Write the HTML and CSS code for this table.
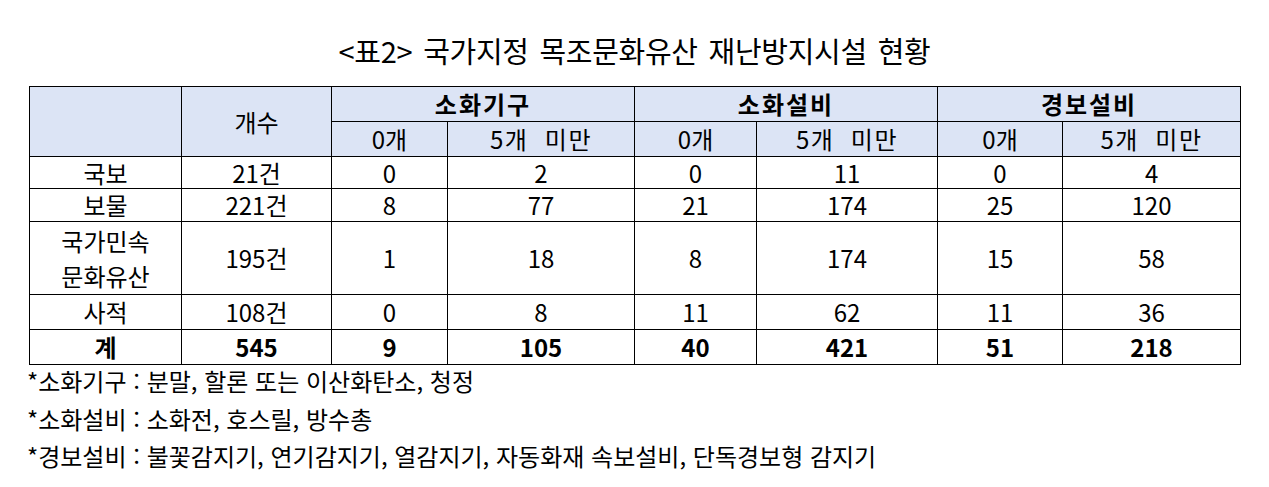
FILE: index.html
```html
<!DOCTYPE html>
<html lang="ko">
<head>
<meta charset="utf-8">
<link rel="stylesheet" href="styles.css">
</head>
<body>
<div class="page">
  <h1 class="title">&lt;표2&gt; 국가지정 목조문화유산 재난방지시설 현황</h1>
  <table class="tbl">
    <colgroup>
      <col class="c1"><col class="c2"><col class="c3"><col class="c4"><col class="c5"><col class="c6"><col class="c7"><col class="c8">
    </colgroup>
    <thead>
      <tr class="h1">
        <th rowspan="2"></th>
        <th rowspan="2" class="norm">개수</th>
        <th colspan="2">소화기구</th>
        <th colspan="2">소화설비</th>
        <th colspan="2">경보설비</th>
      </tr>
      <tr class="h2">
        <th class="norm">0개</th><th class="norm sub">5개&nbsp; 미만</th>
        <th class="norm">0개</th><th class="norm sub">5개&nbsp; 미만</th>
        <th class="norm">0개</th><th class="norm sub">5개&nbsp; 미만</th>
      </tr>
    </thead>
    <tbody>
      <tr class="r1"><td>국보</td><td>21건</td><td>0</td><td>2</td><td>0</td><td>11</td><td>0</td><td>4</td></tr>
      <tr class="r2"><td>보물</td><td>221건</td><td>8</td><td>77</td><td>21</td><td>174</td><td>25</td><td>120</td></tr>
      <tr class="r3"><td class="two">국가민속<br>문화유산</td><td>195건</td><td>1</td><td>18</td><td>8</td><td>174</td><td>15</td><td>58</td></tr>
      <tr class="r4"><td>사적</td><td>108건</td><td>0</td><td>8</td><td>11</td><td>62</td><td>11</td><td>36</td></tr>
      <tr class="r5 total"><td>계</td><td>545</td><td>9</td><td>105</td><td>40</td><td>421</td><td>51</td><td>218</td></tr>
    </tbody>
  </table>
  <div class="notes">
    <p>*소화기구 : 분말, 할론 또는 이산화탄소, 청정</p>
    <p>*소화설비 : 소화전, 호스릴, 방수총</p>
    <p>*경보설비 : 불꽃감지기, 연기감지기, 열감지기, 자동화재 속보설비, 단독경보형 감지기</p>
  </div>
</div>
</body>
</html>
```

FILE: styles.css
```css
html, body {
  margin: 0;
  padding: 0;
  background: #ffffff;
}
body {
  font-family: "Noto Sans CJK KR", "Noto Sans", sans-serif;
  color: #000;
}
.page {
  width: 1269px;
  height: 487px;
  overflow: hidden;
}
.title {
  margin: 0;
  padding-top: 38px;
  height: 86px;
  box-sizing: border-box;
  font-size: 29px;
  font-weight: 400;
  line-height: 24px;
  text-align: center;
  letter-spacing: -0.3px;
  word-spacing: 3px;
}
.tbl {
  margin-left: 29px;
  margin-top: 0;
  border-collapse: collapse;
  table-layout: fixed;
  width: 1211px;
}
.c1 { width: 152px; }
.c2 { width: 150px; }
.c3 { width: 116px; }
.c4 { width: 187px; }
.c5 { width: 122px; }
.c6 { width: 181px; }
.c7 { width: 125px; }
.c8 { width: 178px; }
.tbl th, .tbl td {
  border: 1px solid #000;
  padding: 0;
  text-align: center;
  vertical-align: middle;
  font-size: 24px;
  line-height: 26px;
}
.tbl th {
  background: #dce4f5;
  font-weight: 700;
  letter-spacing: 2px;
}
.tbl th.norm {
  font-weight: 400;
  letter-spacing: 0;
}
.tbl th.sub {
  letter-spacing: 1.5px;
}
.h1, .h2 { height: 35px; }
.r1 { height: 32px; }
.r2 { height: 33px; }
.r3 { height: 73px; }
.r4 { height: 35px; }
.r5 { height: 35px; }
.tbl td.two {
  line-height: 35px;
}
.total td {
  font-weight: 700;
}
.notes {
  padding-left: 27px;
  margin-top: -3px;
}
.notes p {
  margin: 0;
  font-size: 24px;
  line-height: 37.5px;
}
```
